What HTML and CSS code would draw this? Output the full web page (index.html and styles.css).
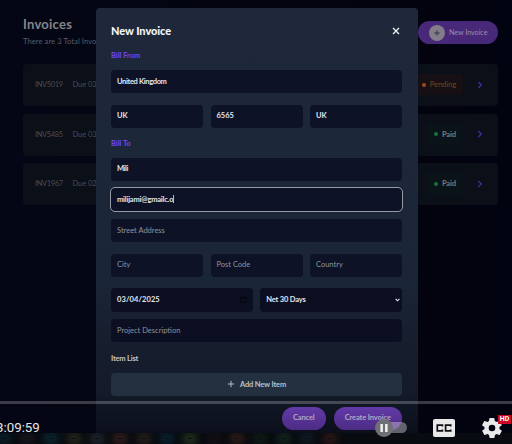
FILE: index.html
```html
<!DOCTYPE html>
<html lang="en">
<head>
<meta charset="utf-8">
<title>Invoices</title>
<link rel="stylesheet" href="styles.css">
</head>
<body>
<main class="page">
  <header class="top">
    <div>
      <h1>Invoices</h1>
      <p class="sub">There are 3 Total Invoices</p>
    </div>
    <div class="new-btn"><span class="plus"><svg width="16" height="16" viewBox="0 0 16 16"><path d="M8 5.3v5.4M5.3 8h5.4" stroke="#37304a" stroke-width="1"/></svg></span><span>New Invoice</span></div>
  </header>
  <section class="list">
    <div class="card"><span class="id">INV5019</span><span class="due">Due 03</span><span class="status pending"><i></i>Pending</span><svg class="chev" width="6" height="8" viewBox="0 0 6 8"><path d="M1.3 1l3 3-3 3"/></svg></div>
    <div class="card"><span class="id">INV5485</span><span class="due">Due 03</span><span class="status paid"><i></i>Paid</span><svg class="chev" width="6" height="8" viewBox="0 0 6 8"><path d="M1.3 1l3 3-3 3"/></svg></div>
    <div class="card"><span class="id">INV1967</span><span class="due">Due 02</span><span class="status paid"><i></i>Paid</span><svg class="chev" width="6" height="8" viewBox="0 0 6 8"><path d="M1.3 1l3 3-3 3"/></svg></div>
  </section>
</main>

<div class="modal">
  <div class="modal-head"><h2>New Invoice</h2><svg width="8" height="8" viewBox="0 0 8 8"><path d="M1 1l6 6M7 1L1 7" stroke="#eef1f6" stroke-width="1.3"/></svg></div>
  <h3 class="from">Bill From</h3>
  <div class="field country"><span class="uk">United Kingdom</span></div>
  <div class="three origin"><div class="field">UK</div><div class="field">6565</div><div class="field">UK</div></div>
  <h3 class="to">Bill To</h3>
  <div class="field client"><span class="mili">Mili</span></div>
  <div class="field focus"><span class="email">milijami@gmailc.o</span><i class="caret"></i></div>
  <div class="field hint street">Street Address</div>
  <div class="three place"><div class="field hint">City</div><div class="field hint">Post Code</div><div class="field hint">Country</div></div>
  <div class="two">
    <div class="field date"><span class="day">03/04/2025</span><svg width="7" height="7" viewBox="0 0 7 7"><path d="M.7 1.2h5.6v5.1H.7z" fill="none" stroke="#05060f" stroke-width=".8"/><path d="M.5 1h6v1.5h-6z" fill="#05060f"/></svg></div>
    <div class="field terms"><span class="net">Net 30 Days</span><svg width="5" height="4" viewBox="0 0 5 4"><path d="M.6.9l1.9 1.9L4.4.9" fill="none" stroke="#e4e8ef" stroke-width="1.1"/></svg></div>
  </div>
  <div class="field hint project">Project Description</div>
  <p class="items">Item List</p>
  <div class="add"><svg width="8" height="8" viewBox="0 0 8 8"><path d="M4 .8v6.4M.8 4h6.4" stroke="#c0c7d0" stroke-width=".9"/></svg><span>Add New Item</span></div>
  <div class="actions"><span class="btn cancel">Cancel</span><span class="btn create">Create Invoice</span></div>
</div>

<div class="taskbar"><i class="b1"></i><i class="b2"></i><i class="b3"></i><i class="b4"></i><i class="b5"></i><i class="b6"></i><i class="b7"></i><i class="b8"></i><i class="b9"></i><i class="b10"></i><i class="b11"></i><i class="b12"></i><i class="b13"></i><i class="b14"></i><i class="b15"></i></div>

<div class="player">
  <div class="progress"></div>
  <div class="controls">
    <span class="time">3:09:59</span>
    <div class="icons">
      <div class="autoplay"><span class="track"></span><svg width="18" height="18" viewBox="0 0 18 18"><circle cx="9" cy="9" r="9" fill="#706f73"/><path d="M5.4 5h2.5v8H5.4zM10.1 5h2.5v8h-2.5z" fill="#f1f1f1"/></svg></div>
      <svg class="cc" width="22" height="18" viewBox="0 0 22 18"><rect width="22" height="18" rx="2" fill="#e9e9e9"/><path d="M9.4 7.6V6.2H4.3v5.6h5.1v-1.4M17.7 7.6V6.2h-5.1v5.6h5.1v-1.4" fill="none" stroke="#101014" stroke-width="1.7"/></svg>
      <div class="gear"><svg width="24" height="24" viewBox="0 0 24 24"><path fill="#e9e9e9" d="M19.4 13a7.6 7.6 0 0 0 0-2l2.1-1.6c.2-.2.2-.4.1-.6l-2-3.5c-.1-.2-.4-.3-.6-.2l-2.5 1a7.7 7.7 0 0 0-1.7-1l-.4-2.7a.5.5 0 0 0-.5-.4h-4c-.2 0-.5.2-.5.4L9 5.1a7.7 7.7 0 0 0-1.7 1l-2.5-1c-.2-.1-.5 0-.6.2l-2 3.5c-.1.2-.1.5.1.6L4.5 11a7.6 7.6 0 0 0 0 2l-2.1 1.6c-.2.2-.2.4-.1.6l2 3.5c.1.2.4.3.6.2l2.5-1c.5.4 1.1.7 1.7 1l.4 2.7c0 .2.2.4.5.4h4c.2 0 .5-.2.5-.4l.4-2.7c.6-.3 1.2-.6 1.7-1l2.5 1c.2.1.5 0 .6-.2l2-3.5c.1-.2.1-.5-.1-.6zM12 15.3a3.3 3.3 0 1 1 0-6.6 3.3 3.3 0 0 1 0 6.6z"/></svg><b>HD</b></div>
    </div>
  </div>
</div>
</body>
</html>
```
FILE: styles.css
```css
* { box-sizing: border-box; }
body { margin: 0; width: 512px; height: 444px; overflow: hidden; position: relative; background: #03040f; font-family: Lato, "Liberation Sans", sans-serif; font-size: 7.5px; }
h1, h2, h3, p { margin: 0; }
svg { display: block; flex: none; }
i { display: block; }

.page { padding: 15px 14px 0 23px; height: 444px; background: linear-gradient(90deg, #040615, #03040f 60%, #020310); }
.top { display: flex; justify-content: space-between; height: 49px; }
.top h1 { font-size: 13px; line-height: 18px; color: #85858b; letter-spacing: .25px; }
.sub { margin-top: 4px; font-size: 7.5px; line-height: 10px; color: #5a5c64; white-space: nowrap; letter-spacing: .1px; }
.new-btn { display: flex; align-items: center; gap: 4px; margin-top: 6px; width: 80px; height: 23px; padding-left: 11px; border-radius: 12px; background: #472879; color: #9c8eaf; white-space: nowrap; font-size: 7.2px; letter-spacing: -.05px; }
.plus { width: 16px; height: 16px; border-radius: 50%; background: #827d88; }
.list { display: flex; flex-direction: column; gap: 7.5px; }
.card { display: flex; align-items: center; height: 42px; padding: 0 15px 1px 12px; border-radius: 4px; background: #0b0f18; color: #4a4c53; }
.id { width: 37.5px; letter-spacing: -.38px; }
.due { letter-spacing: -.05px; }
.status { display: flex; align-items: center; gap: 4px; height: 21px; margin-left: auto; border-radius: 3px; padding: 0 7px; white-space: nowrap; }
.status i { width: 4px; height: 4px; border-radius: 50%; }
.pending { color: #81401b; background: #160f13; letter-spacing: -.05px; }
.pending i { background: #9c4b20; }
.paid { color: #777d7d; background: #0a1418; font-weight: bold; letter-spacing: -.1px; }
.paid i { background: #1a713b; }
.chev { margin-left: 14px; }
.chev path { fill: none; stroke: #46309a; stroke-width: 1.2; }

.modal { position: absolute; left: 96px; top: 8px; width: 321.5px; height: 425px; padding: 15px 15.5px 0 15px; border-radius: 4px 4px 0 0; background: linear-gradient(#1e283a, #1a2638 62%, #171e2e 78%, #141a29 90%, #0b0f1b); color: #e2e5ed; }
.modal-head { display: flex; justify-content: space-between; align-items: center; height: 16px; }
.modal-head svg { margin-right: 2px; }
h2 { font-size: 11px; line-height: 16px; color: #f3f4f8; font-weight: 900; letter-spacing: -.07px; }
h3 { font-size: 7.5px; line-height: 10px; color: #7044df; font-weight: 900; }
.from { margin-top: 12px; letter-spacing: -.05px; }
.to { margin-top: 11.5px; letter-spacing: -.05px; }
.field { display: flex; align-items: center; height: 23px; padding: 0 6px 1px; border-radius: 4px; background: #0e1226; font-weight: bold; white-space: nowrap; }
.hint { color: #8e929e; font-weight: normal; }
.country { margin-top: 9px; }
.uk { letter-spacing: -.35px; }
.mili { letter-spacing: -.45px; }
.email { letter-spacing: -.2px; }
.day { letter-spacing: .1px; }
.net { letter-spacing: -.18px; }
.three { display: grid; grid-template-columns: repeat(3, 1fr); gap: 7.5px; }
.origin { margin-top: 11.5px; }
.client { margin-top: 8.5px; }
.focus { margin-top: 7.5px; outline: 1.4px solid #969ba6; }
.caret { width: 1px; height: 8px; background: #b5b9c2; }
.street { margin-top: 8px; }
.place { margin-top: 11.5px; }
.two { display: grid; grid-template-columns: 1fr 1fr; gap: 7.5px; margin-top: 11px; }
.two .field { height: 24px; justify-content: space-between; background: #0b0f21; }
.terms.field { padding-right: 2px; }
.terms.field, .date.field { padding-bottom: 0; }
.project { margin-top: 7.5px; background: #0c0f21; }
.items { margin-top: 11.5px; line-height: 10px; color: #c3c6cf; font-weight: bold; letter-spacing: -.2px; }
.add { display: flex; align-items: center; justify-content: center; gap: 5px; height: 23px; margin-top: 9px; border-radius: 4px; background: #223040; color: #bbc0c8; font-weight: bold; letter-spacing: -.15px; }
.actions { display: flex; justify-content: flex-end; gap: 7.5px; margin-top: 11px; }
.btn { display: flex; align-items: center; justify-content: center; height: 23.5px; padding-bottom: 1px; border-radius: 12px; background: linear-gradient(#643aa8, #4b2c83); color: #b2a5c8; font-weight: bold; white-space: nowrap; letter-spacing: -.12px; }
.cancel { width: 44.5px; }
.create { width: 68.5px; }

.taskbar { position: absolute; left: 0; top: 433px; width: 512px; height: 11px; display: flex; align-items: center; gap: 19.3px; padding-left: 2px; background: #080b10; overflow: hidden; }
.taskbar i { width: 4px; height: 1px; flex: none; }
.b1 { box-shadow: 0 0 8px 4px #0c2833; }
.b2 { box-shadow: 0 0 8px 4px #201a27; }
.b3 { box-shadow: 0 0 8px 4px #0b3540; }
.b4 { box-shadow: 0 0 8px 4px #30341f; }
.b5 { box-shadow: 0 0 8px 4px #293238; }
.b6 { box-shadow: 0 0 8px 4px #43271f; }
.b7 { box-shadow: 0 0 8px 4px #352822; }
.b8 { box-shadow: 0 0 8px 4px #092d42; }
.b9 { box-shadow: 0 0 8px 4px #2b4220; }
.b10 { box-shadow: 0 0 8px 4px #1c1218; }
.b11 { box-shadow: 0 0 8px 4px #422318; }
.b12 { box-shadow: 0 0 8px 4px #142419; }
.b13 { box-shadow: 0 0 8px 4px #173324; }
.b14 { box-shadow: 0 0 8px 4px #14242d; }
.b15 { box-shadow: 0 0 8px 4px #401d1a; }

.player { position: absolute; left: 0; top: 401px; width: 512px; height: 43px; }
.progress { height: 3px; background: rgba(255, 255, 255, .22); }
.controls { display: flex; justify-content: space-between; align-items: center; height: 47px; padding-right: 8px; }
.time { margin-left: -4px; font: 13.3px/16px Roboto, sans-serif; color: #e6e6e6; padding-top: 1px; }
.icons { display: flex; align-items: center; }
.autoplay { position: relative; width: 32px; height: 18px; padding: 3px 0 0 7px; margin-right: 26px; }
.autoplay svg { position: absolute; left: 0; top: 0; }
.track { display: block; width: 25px; height: 11px; border-radius: 6px; background: rgba(220, 215, 225, .42); }
.cc { margin-right: 25px; }
.gear { position: relative; width: 24px; height: 24px; }
.gear b { position: absolute; left: 18px; top: -1px; width: 13px; height: 9px; background: #cc0728; color: #fff; font: bold 7px/9px Roboto, sans-serif; text-align: center; }
```
